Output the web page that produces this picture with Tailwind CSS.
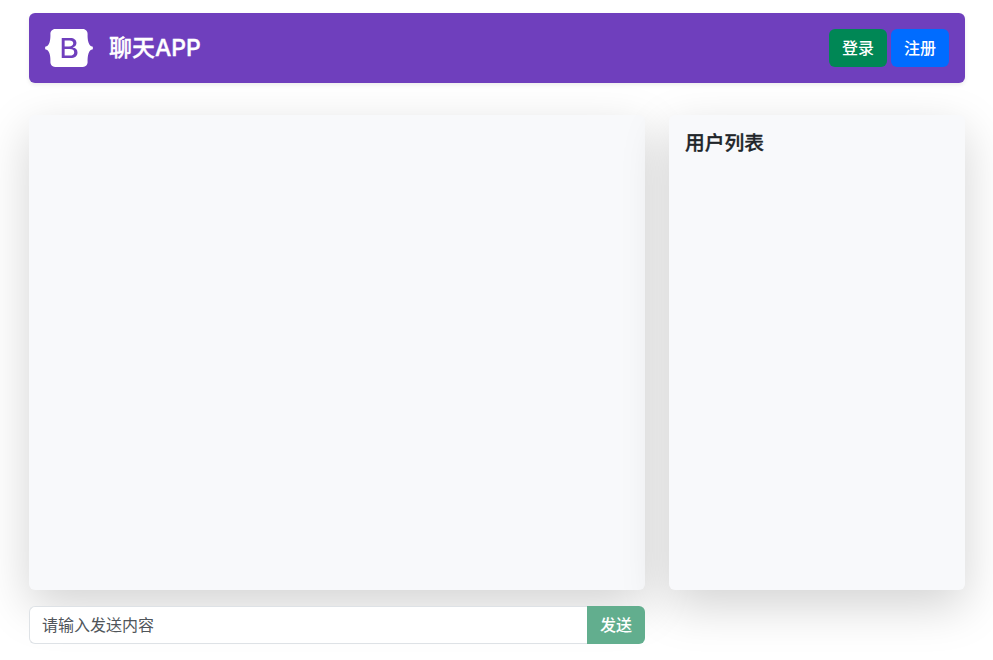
<!DOCTYPE html>
<html lang="zh-CN">
<head>
<meta charset="utf-8">
<title>聊天APP</title>
<script src="https://cdn.jsdelivr.net/npm/@tailwindcss/browser@4"></script>
</head>
<body class="bg-white text-[#212529] text-base leading-6 font-['Inter','Noto_Sans_CJK_SC',sans-serif] overflow-hidden">
<main class="h-[660px] pl-[29px] pr-7 pt-[13px]">
  <header class="flex h-[70px] items-center rounded-md bg-[#6f3fbd] px-4 text-white shadow-[0_2px_4px_rgba(0,0,0,0.075)]">
    <svg class="mr-4 h-[38px] w-12 shrink-0" viewBox="0 0 118 94" fill="none">
      <path fill="currentColor" d="M24.509 0c-6.733 0-11.715 5.893-11.492 12.284.214 6.14-.064 14.092-2.066 20.577C8.943 39.365 5.547 43.485 0 44.014v5.972c5.547.529 8.943 4.649 10.951 11.153 2.002 6.485 2.28 14.437 2.066 20.577C12.794 88.106 17.776 94 24.51 94H93.5c6.733 0 11.714-5.893 11.491-12.284-.214-6.14.064-14.092 2.066-20.577 2.009-6.504 5.396-10.624 10.943-11.153v-5.972c-5.547-.529-8.934-4.649-10.943-11.153-2.002-6.484-2.28-14.437-2.066-20.577C105.214 5.894 100.233 0 93.5 0H24.508z"/>
      <path fill="#6f3fbd" fill-rule="evenodd" d="M80 57.863C80 66.663 73.436 72 62.543 72H41V22h21.437c9.083 0 15.044 4.92 15.044 12.474 0 5.302-4.01 10.049-9.119 10.88v.277C75.317 46.394 80 51.21 80 57.863zM60.521 28.34H48.2v14.934h10.653c6.884 0 10.68-2.772 10.68-7.727 0-4.643-3.264-7.207-9.012-7.207zM48.2 49.2v16.458H60.91c7.167 0 10.964-2.876 10.964-8.281 0-5.406-3.903-8.178-11.425-8.178H48.2z"/>
    </svg>
    <h1 class="text-[23px] font-medium leading-7 [-webkit-text-stroke:0.35px]">聊天APP</h1>
    <div class="ml-auto flex gap-1">
      <button class="h-[38px] w-[58px] rounded-md bg-[#008755] font-medium">登录</button>
      <button class="h-[38px] w-[58px] rounded-md bg-[#006cff] font-medium">注册</button>
    </div>
  </header>
  <div class="mt-8 grid grid-cols-[616px_296px] gap-x-6">
    <section class="h-[475px] rounded-md bg-[#f8f9fb] shadow-[0_16px_48px_rgba(0,0,0,0.175)]"></section>
    <aside class="h-[475px] rounded-md bg-[#f8f9fb] px-4 pt-4 shadow-[0_16px_48px_rgba(0,0,0,0.175)]"><h2 class="text-[19.8px] leading-6 font-medium [-webkit-text-stroke:0.3px]">用户列表</h2></aside>
    <form class="relative mt-4 flex h-[38px]">
      <input type="text" placeholder="请输入发送内容" class="min-w-0 flex-1 rounded-l-md border border-r-0 border-[#dee2e6] bg-white px-3 placeholder:text-[#50555a]">
      <button type="button" disabled class="w-[58px] rounded-r-md bg-[#62ae8e] font-medium text-white">发送</button>
    </form>
  </div>
</main>
</body>
</html>
